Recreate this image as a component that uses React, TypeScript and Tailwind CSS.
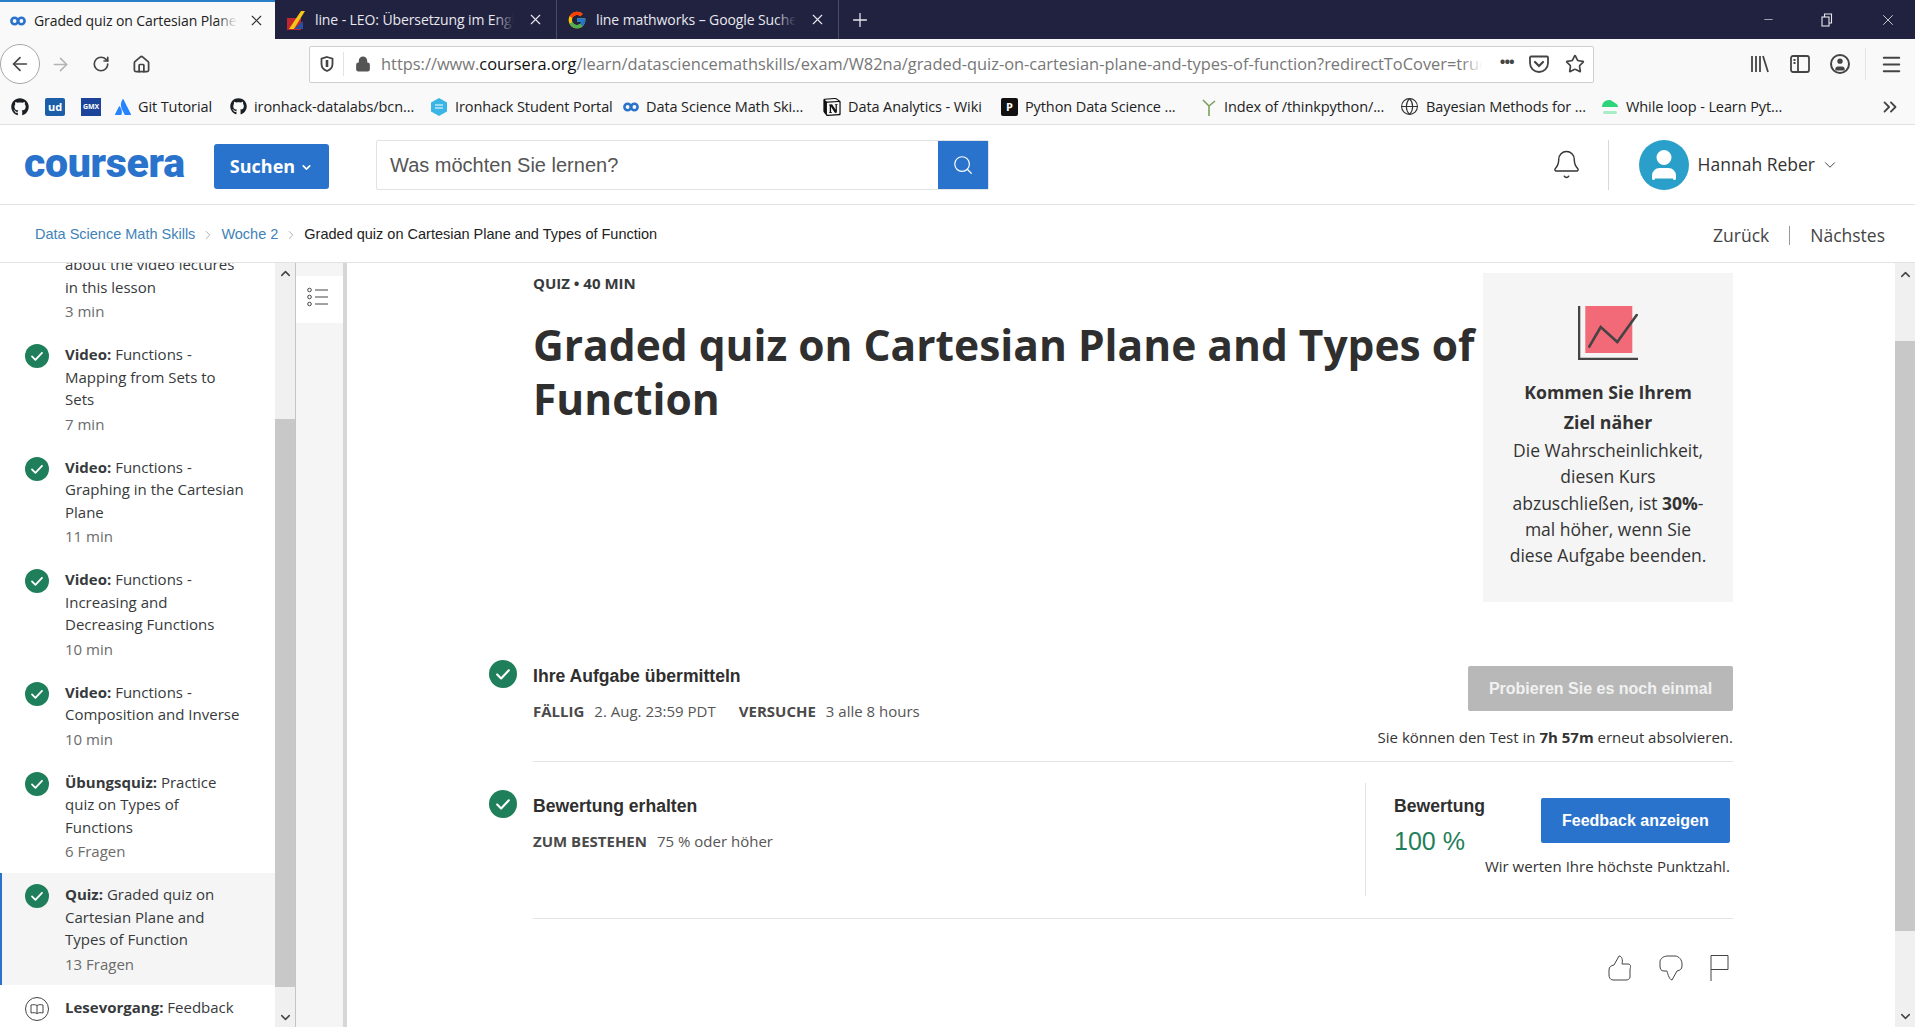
import React from 'react';
import { ArrowLeft, ArrowRight, RotateCw, Home, Lock, Star, Search, ChevronDown, ChevronUp, ChevronRight, ChevronsRight, Bell, Plus, X, Minus, Globe, User, Menu } from 'lucide-react';
import { FaGithub } from 'react-icons/fa';
import { FcGoogle } from 'react-icons/fc';
import { SiAtlassian, SiNotion } from 'react-icons/si';

const CourseraMark = () => (
  <svg width="16" height="10" viewBox="0 0 16 10" fill="none" stroke="#2a73cc" strokeWidth="2.6">
    <circle cx="4.6" cy="5" r="3.2" />
    <circle cx="11.4" cy="5" r="3.2" />
  </svg>
);

const Check = ({ size }: { size: number }) => (
  <svg width={size} height={size} viewBox="0 0 24 24" className="shrink-0">
    <circle cx="12" cy="12" r="12" fill="#1f7f5a" />
    <path d="M7 12.4l3.4 3.4L17 8.8" fill="none" stroke="#fff" strokeWidth="1.8" strokeLinecap="round" strokeLinejoin="round" />
  </svg>
);

const BookCircle = () => (
  <svg width="24" height="24" viewBox="0 0 24 24" fill="none" stroke="#444" strokeWidth="1" className="shrink-0">
    <circle cx="12" cy="12" r="11.5" />
    <path d="M12 8.5c-1.5-1-4-1-6-.5v8c2-.5 4.5-.5 6 .5 1.5-1 4-1 6-.5V8c-2-.5-4.5-.5-6 .5zM12 8.5v8" />
  </svg>
);

const TABS = [
  { title: 'Graded quiz on Cartesian Plane', width: 'w-[275px]', iconWidth: 'w-[34px]', closeWidth: 'w-[38px]', active: true },
  { title: 'line - LEO: Übersetzung im Engl', width: 'w-[282px]', iconWidth: 'w-[40px]', closeWidth: 'w-[42px]', active: false },
  { title: 'line mathworks – Google Suche', width: 'w-[282px]', iconWidth: 'w-[39px]', closeWidth: 'w-[42px]', active: false },
];

const BOOKMARKS: { label?: string; width: string; icon: React.ReactNode }[] = [
  { width: 'w-[34px]', icon: <FaGithub size={18} color="#1b1f23" /> },
  { width: 'w-[36px]', icon: <span className="w-[20px] h-[18px] bg-[#1c5fa8] text-white text-[11px] font-bold leading-[18px] text-center rounded-[2px]">ud</span> },
  { width: 'w-[34px]', icon: <span className="w-[20px] h-[18px] bg-[#1c449b] text-white text-[7px] font-bold leading-[18px] text-center">GMX</span> },
  { label: 'Git Tutorial', width: 'w-[115px]', icon: <SiAtlassian size={16} color="#2684ff" /> },
  { label: 'ironhack-datalabs/bcn...', width: 'w-[200px]', icon: <FaGithub size={17} color="#1b1f23" /> },
  { label: 'Ironhack Student Portal', width: 'w-[193px]', icon: <svg width="18" height="18" viewBox="0 0 18 18"><path d="M9 0l8 4.5v9L9 18l-8-4.5v-9z" fill="#39b6e6" /><path d="M5 7h8M5 10h8" stroke="#fff" strokeWidth="1" /></svg> },
  { label: 'Data Science Math Ski...', width: 'w-[200px]', icon: <CourseraMark /> },
  { label: 'Data Analytics - Wiki', width: 'w-[178px]', icon: <SiNotion size={18} color="#111" /> },
  { label: 'Python Data Science ...', width: 'w-[200px]', icon: <span className="w-[17px] h-[18px] bg-[#111] text-white text-[11px] font-bold leading-[18px] text-center rounded-[2px]">P</span> },
  { label: 'Index of /thinkpython/...', width: 'w-[199px]', icon: <svg width="16" height="18" viewBox="0 0 16 18" fill="none" stroke="#7ba05b" strokeWidth="1.6"><path d="M8 18V8M8 8L2 2M8 8l6-5" /></svg> },
  { label: 'Bayesian Methods for ...', width: 'w-[201px]', icon: <Globe size={19} color="#333" strokeWidth={1.4} /> },
  { label: 'While loop - Learn Pyt...', width: 'w-[190px]', icon: <svg width="18" height="16" viewBox="0 0 18 16"><path d="M1 8c0-4 3-7 7-7 3 0 4 2 6 3 2 1 3 2 3 4H1z" fill="#2ed47a" /><rect x="2" y="12" width="14" height="3" rx="1.5" fill="#a8ecc6" /></svg> },
];

const LESSONS: { kind: string; lines: string; meta: string; selected?: boolean }[] = [
  { kind: 'Video:', lines: 'Functions - Mapping from Sets to Sets', meta: '7 min' },
  { kind: 'Video:', lines: 'Functions - Graphing in the Cartesian Plane', meta: '11 min' },
  { kind: 'Video:', lines: 'Functions - Increasing and Decreasing Functions', meta: '10 min' },
  { kind: 'Video:', lines: 'Functions - Composition and Inverse', meta: '10 min' },
  { kind: 'Übungsquiz:', lines: 'Practice quiz on Types of Functions', meta: '6 Fragen' },
  { kind: 'Quiz:', lines: 'Graded quiz on Cartesian Plane and Types of Function', meta: '13 Fragen', selected: true },
];

const ScrollArrow = ({ up }: { up?: boolean }) =>
  up ? <ChevronUp size={15} strokeWidth={2.4} color="#444" /> : <ChevronDown size={15} strokeWidth={2.4} color="#444" />;

const BrowserChrome = () => (
  <>
    <div className="h-[39px] bg-[#20223f] flex shrink-0">
      {TABS.map((tab, i) => (
        <div key={tab.title} className={`${tab.width} h-full flex items-center relative ${tab.active ? 'bg-[#f9f9fa] border-t-2 border-[#2a7fc9] text-[#222]' : 'border-r border-[#4a4c66] text-[#e8e8ee]'}`}>
          <span className={`${tab.iconWidth} flex justify-center shrink-0 pl-[1px]`}>
            {i === 0 && <CourseraMark />}
            {i === 1 && <svg width="20" height="22" viewBox="0 0 20 22"><rect x="1" y="9" width="14" height="12" fill="#c1272d" /><path d="M3 20L15 2h4L8 20z" fill="#f5c518" /><path d="M8 20l9-8v8z" fill="#2a4f9e" /></svg>}
            {i === 2 && <FcGoogle size={20} />}
          </span>
          <span className="flex-1 text-[14px] whitespace-nowrap overflow-hidden relative tracking-[-0.1px]">
            {tab.title}
            <span className={`absolute right-0 top-0 bottom-0 w-[20px] bg-gradient-to-l ${tab.active ? 'from-[#f9f9fa]' : 'from-[#20223f]'} to-transparent`} />
          </span>
          <span className={`${tab.closeWidth} flex justify-center shrink-0`}>
            <X size={17} strokeWidth={1.6} color={tab.active ? '#333' : '#e8e8ee'} />
          </span>
        </div>
      ))}
      <div className="w-[42px] flex items-center justify-center">
        <Plus size={22} strokeWidth={1.4} color="#e8e8ee" />
      </div>
      <div className="flex-1" />
      <div className="flex items-center pr-[18px] gap-[46px] text-[#e8e8ee]">
        <Minus size={13} strokeWidth={1.2} />
        <svg width="12" height="14" viewBox="0 0 12 14" fill="none" stroke="#e8e8ee" strokeWidth="1.1"><rect x="1" y="4" width="7" height="9" /><path d="M3.5 4V1h7v9H8" /></svg>
        <X size={18} strokeWidth={1.1} />
      </div>
    </div>

    <div className="h-[50px] bg-[#f9f9fa] flex items-center shrink-0 text-[#444]">
      <div className="w-[40px] h-[40px] rounded-full border border-[#a8a8a8] bg-white flex items-center justify-center shrink-0">
        <ArrowLeft size={22} strokeWidth={1.8} />
      </div>
      <div className="w-[40px] flex justify-center"><ArrowRight size={21} strokeWidth={1.8} color="#b4b4b4" /></div>
      <div className="w-[41px] flex justify-center"><RotateCw size={18} strokeWidth={2.2} /></div>
      <div className="w-[40px] flex justify-center"><Home size={19} strokeWidth={2.2} /></div>
      <div className="w-[148px]" />
      <div className="w-[1285px] h-[37px] bg-white border border-[#cfcfcf] rounded-[2px] flex items-center shrink-0">
        <span className="w-[34px] flex justify-center border-r border-[#e3e3e3] h-[24px] items-center">
          <svg width="14" height="16" viewBox="0 0 14 16" fill="none" stroke="#444" strokeWidth="1.8"><path d="M7 1l5.5 1.6V8c0 3.5-2.5 5.8-5.5 7C4 13.8 1.500 11.500 1.500 8V2.600z" /><path d="M7 4v7" strokeWidth="2.6" /></svg>
        </span>
        <span className="w-[37px] flex justify-center"><Lock size={16} strokeWidth={2.6} fill="#555" color="#555" /></span>
        <span className="w-[1101px] text-[16.4px] text-[#777] whitespace-nowrap overflow-hidden relative">
          https://www.<span className="text-[#111]">coursera.org</span>/learn/datasciencemathskills/exam/W82na/graded-quiz-on-cartesian-plane-and-types-of-function?redirectToCover=true
          <span className="absolute right-0 top-0 bottom-0 w-[20px] bg-gradient-to-l from-white to-transparent" />
        </span>
        <span className="flex-1 flex items-center justify-around pl-[10px]">
          <span className="text-[15px] font-bold leading-none tracking-[-1px] pb-[6px]">•••</span>
          <svg width="20" height="19" viewBox="0 0 20 19" fill="none" stroke="#444" strokeWidth="1.8"><path d="M2 1.500h16a1 1 0 011 1V8c0 5-4 9-9 9s-9-4-9-9V2.500a1 1 0 011-1z" /><path d="M6 7l4 4 4-4" strokeLinecap="round" strokeWidth="2.200" /></svg>
          <Star size={20} strokeWidth={2} />
        </span>
      </div>
      <div className="w-[156px]" />
      <svg width="20" height="20" viewBox="0 0 20 20" fill="none" stroke="#444" strokeWidth="1.800" className="shrink-0"><path d="M2 2v16M6 2v16M10 2v16M13 2l5 16" /></svg>
      <div className="w-[20px]" />
      <svg width="20" height="20" viewBox="0 0 20 20" fill="none" stroke="#444" strokeWidth="1.800" className="shrink-0"><rect x="1" y="2" width="18" height="16" rx="2" /><path d="M8 2v16M3.500 6h2M3.500 9h2" /></svg>
      <div className="w-[20px]" />
      <div className="w-[20px] h-[20px] rounded-full border-2 border-[#444] flex items-center justify-center shrink-0 overflow-hidden"><User size={17} fill="#444" strokeWidth={0} /></div>
      <div className="w-[15px]" />
      <div className="w-px h-[32px] bg-[#e3e3e3]" />
      <div className="w-[14px]" />
      <Menu size={23} strokeWidth={2.2} className="shrink-0" />
    </div>

    <div className="h-[36px] bg-[#f9f9fa] border-b border-[#e0e0e0] flex items-center pl-[11px] shrink-0">
      {BOOKMARKS.map((b, i) => (
        <div key={i} className={`${b.width} flex items-center gap-[7px] shrink-0 text-[14.5px] text-[#222] whitespace-nowrap tracking-[-0.1px]`}>
          <span className="flex items-center justify-center">{b.icon}</span>
          {b.label && <span>{b.label}</span>}
        </div>
      ))}
      <div className="flex-1" />
      <ChevronsRight size={22} strokeWidth={2} color="#444" className="mr-[14px]" />
    </div>
  </>
);

const SiteHeader = () => (
  <>
    <div className="h-[80px] border-b border-[#e3e3e3] flex items-center shrink-0 pl-[24px]">
      <div className="w-[190px] font-['Roboto',sans-serif] font-black text-[41px] leading-none text-[#2a73cc] tracking-[-0.3px] pb-[2px]">coursera</div>
      <div className="w-[115px] h-[45px] mt-[3px] bg-[#2a73cc] rounded-[3px] flex items-center justify-center gap-[5px] text-white text-[18px] font-bold">
        Suchen <ChevronDown size={13} strokeWidth={3} className="mt-[3px]" />
      </div>
      <div className="ml-[47px] w-[613px] h-[50px] flex border border-[#e3e3e3] rounded-[2px] items-stretch">
        <div className="flex-1 flex items-center pl-[13px] font-['Liberation_Sans',sans-serif] text-[20px] text-[#555]">Was möchten Sie lernen?</div>
        <div className="w-[50px] bg-[#2a73cc] flex items-center justify-center"><Search size={22} strokeWidth={1.300} color="#fff" /></div>
      </div>
      <div className="flex-1" />
      <Bell size={31} strokeWidth={1.100} color="#333" />
      <div className="w-px h-[50px] bg-[#d8d8d8] ml-[26px] mr-[30px]" />
      <div className="w-[50px] h-[50px] rounded-full bg-[#2a9fc9] flex items-center justify-center overflow-hidden">
        <User size={36} fill="#fff" color="#fff" />
      </div>
      <div className="ml-[9px] text-[17.5px] text-[#333]">Hannah Reber</div>
      <ChevronDown size={18} strokeWidth={1.200} color="#333" className="ml-[6px] mr-[76px]" />
    </div>

    <div className="h-[58px] pt-[3px] border-b border-[#e3e3e3] flex items-center shrink-0 pl-[35px] font-['Liberation_Sans',sans-serif] text-[14.5px] bg-white">
      <span className="text-[#3f82b8]">Data Science Math Skills</span>
      <ChevronRight size={14} strokeWidth={1} color="#777" className="mx-[6px]" />
      <span className="text-[#3f82b8]">Woche 2</span>
      <ChevronRight size={14} strokeWidth={1} color="#777" className="mx-[6px]" />
      <span className="text-[#222]">Graded quiz on Cartesian Plane and Types of Function</span>
      <div className="flex-1" />
      <span className="font-['Open_Sans',sans-serif] text-[17.5px] text-[#444]">Zurück</span>
      <div className="w-px h-[19px] bg-[#999] mx-[20px]" />
      <span className="font-['Open_Sans',sans-serif] text-[17.5px] text-[#444] mr-[30px]">Nächstes</span>
    </div>
  </>
);

const Lesson = ({ kind, lines, meta, selected }: { kind: string; lines: string; meta: string; selected?: boolean }) => (
  <div className={`flex pr-[28px] pt-[11.25px] pb-[9.25px] ${selected ? 'bg-[#f5f5f5] border-l-2 border-[#2a73cc] pl-[23px]' : 'pl-[25px]'}`}>
    <div className="w-[40px] shrink-0"><Check size={24} /></div>
    <div className="text-[15px] leading-[22.5px] text-[#373a3c] -mt-[1px] mb-[1px]">
      <div><b className="font-bold">{kind}</b> {lines}</div>
      <div className="text-[#6b6b6b] mt-[2px]">{meta}</div>
    </div>
  </div>
);

const Sidebar = () => (
  <div className="flex shrink-0 h-full">
    <div className="w-[275px] h-full overflow-hidden">
      <div className="-mt-[10px] pl-[65px] pr-[28px] pb-[10.25px] text-[15px] leading-[22.5px] text-[#373a3c]">
        <div>about the video lectures in this lesson</div>
        <div className="text-[#6b6b6b] mt-[2px]">3 min</div>
      </div>
      {LESSONS.map(l => <Lesson key={l.lines} {...l} />)}
      <div className="flex pl-[25px] pr-[28px] py-[11.25px]">
        <div className="w-[40px] shrink-0"><BookCircle /></div>
        <div className="text-[15px] leading-[22.5px] text-[#373a3c] -mt-[1px]"><b className="font-bold">Lesevorgang:</b> Feedback</div>
      </div>
    </div>
    <div className="w-[21px] h-full bg-[#f0f0f0] border-r border-[#c4c4c4] flex flex-col items-center">
      <div className="h-[20px] flex items-center"><ScrollArrow up /></div>
      <div className="h-[136px]" />
      <div className="w-full flex-1 bg-[#c8c8c8]" />
      <div className="h-[40px] flex items-end pb-[2px]"><ScrollArrow /></div>
    </div>
    <div className="w-[47px] h-full bg-[#f5f5f5] border-r-[4px] border-[#d6d6d6] box-content">
      <div className="h-[47px] bg-white flex items-center justify-center mt-[13px] pb-[5px] pr-[3px]">
        <svg width="22" height="20" viewBox="0 0 22 20" fill="none" stroke="#444" strokeWidth="1">
          <circle cx="2.500" cy="3" r="1.800" /><circle cx="2.500" cy="10" r="1.800" /><circle cx="2.500" cy="17" r="1.800" />
          <path d="M8 3h13M8 10h13M8 17h13" />
        </svg>
      </div>
    </div>
  </div>
);

const Label = ({ children }: { children: React.ReactNode }) => <b className="font-bold text-[#4a4a4a]">{children}</b>;

const Content = () => (
  <div className="flex-1 h-full overflow-hidden pl-[142px]">
    <div className="w-[1244px]">
      <div className="pl-[44px] flex items-start">
        <div className="w-[950px]">
          <div className="text-[15px] font-bold leading-[20px] text-[#373a3c] mt-[10px]">QUIZ • 40 MIN</div>
          <h1 className="text-[42.5px] font-bold leading-[54px] text-[#2f2f2f] mt-[25px]">Graded quiz on Cartesian Plane and Types of Function</h1>
        </div>
        <div className="w-[250px] h-[329px] bg-[#f5f5f5] mt-[10px] flex flex-col items-center pt-[33px] px-[24px] text-center text-[#333]">
          <svg width="60" height="54" viewBox="0 0 60 54" className="shrink-0">
            <rect x="7.300" y="0" width="47" height="47" fill="#f26a78" />
            <path d="M1 0v53h59" fill="none" stroke="#444" strokeWidth="2.600" />
            <path d="M11.300 40.700L22.700 21l16.600 15L58.700 9" fill="none" stroke="#444" strokeWidth="2.600" strokeLinecap="round" />
          </svg>
          <div className="text-[17.7px] font-bold leading-[30px] mt-[17px]">Kommen Sie Ihrem Ziel näher</div>
          <div className="text-[17.5px] leading-[26.25px]">Die Wahrscheinlichkeit, diesen Kurs abzuschließen, ist <b className="font-bold">30%</b>-mal höher, wenn Sie diese Aufgabe beenden.</div>
        </div>
      </div>

      <div className="mt-[52px] ml-[44px] relative">
        <div className="h-[107px] border-b border-[#e3e3e3] flex justify-between box-content -mb-px">
          <div className="flex -ml-[44px]">
            <div className="w-[44px] pt-[6px]"><Check size={28} /></div>
            <div className="pt-[8px]">
              <div className="font-['Liberation_Sans',sans-serif] font-bold text-[17.6px] leading-[28px] text-[#2f2f2f]">Ihre Aufgabe übermitteln</div>
              <div className="mt-[10px] text-[15px] leading-[22px] text-[#555] flex gap-[10px]">
                <Label>FÄLLIG</Label><span>2. Aug. 23:59 PDT</span><span className="w-[3px]" /><Label>VERSUCHE</Label><span>3 alle 8 hours</span>
              </div>
            </div>
          </div>
          <div className="pt-[12px] flex flex-col items-end">
            <div className="w-[265px] h-[45px] bg-[#b8b8b8] rounded-[2px] flex items-center justify-center font-['Liberation_Sans',sans-serif] font-bold text-[16px] text-[#f1f1f1]">Probieren Sie es noch einmal</div>
            <div className="mt-[15px] text-[15px] leading-[22px] text-[#333]">Sie können den Test in <b className="font-bold">7h 57m</b> erneut absolvieren.</div>
          </div>
        </div>

        <div className="h-[156px] border-t border-b border-[#e3e3e3] flex justify-between box-content">
          <div className="flex -ml-[44px]">
            <div className="w-[44px] pt-[28px]"><Check size={28} /></div>
            <div className="pt-[30px]">
              <div className="font-['Liberation_Sans',sans-serif] font-bold text-[17.6px] leading-[28px] text-[#2f2f2f]">Bewertung erhalten</div>
              <div className="mt-[10px] text-[15px] leading-[22px] text-[#555] flex gap-[10px]">
                <Label>ZUM BESTEHEN</Label><span>75 % oder höher</span>
              </div>
            </div>
          </div>
          <div className="mt-[21px] h-[113px] w-[368px] border-l border-[#e3e3e3] pl-[28px] pr-[5px] pt-[11px] flex justify-between items-start">
            <div>
              <div className="font-['Liberation_Sans',sans-serif] font-bold text-[17.6px] leading-[24px] text-[#2f2f2f]">Bewertung</div>
              <div className="mt-[6px] font-['Liberation_Sans',sans-serif] text-[25px] leading-[34px] text-[#1f7f5a]">100 %</div>
            </div>
            <div className="flex flex-col items-end mt-[4px]">
              <div className="w-[189px] h-[45px] bg-[#2a73cc] rounded-[2px] flex items-center justify-center font-['Liberation_Sans',sans-serif] font-bold text-[16px] text-white">Feedback anzeigen</div>
              <div className="mt-[12px] text-[15px] leading-[22px] text-[#333] whitespace-nowrap">Wir werten Ihre höchste Punktzahl.</div>
            </div>
          </div>
        </div>

        <div className="mt-[36px] flex justify-end items-center gap-[27px] pr-[4px]">
          <svg width="24" height="26" viewBox="0 0 24 26" fill="none" stroke="#444" strokeWidth="1"><path d="M1 15c0-3 2-4.500 5-5L11 1c3 0 4 4 3 8h6c3 0 3 3 2 5v8c0 2-2 3-4 3H5c-3 0-4-3-4-5z" /></svg>
          <svg width="24" height="26" viewBox="0 0 24 26" fill="none" stroke="#444" strokeWidth="1"><path d="M23 11c0 3-2 4.500-5 5l-5 9c-3 0-5-9-5-9H5C2 16 1 14 1 11V7c0-3 3-6 8-6h7c4 0 7 4 7 8z" /></svg>
          <svg width="19" height="26" viewBox="0 0 19 26" fill="none" stroke="#444" strokeWidth="1"><path d="M1 26V.5h17v14H1" /></svg>
        </div>
      </div>
    </div>
  </div>
);

export default function App() {
  return (
    <div className="w-[1915px] h-[1027px] overflow-hidden bg-white flex flex-col font-['Open_Sans',sans-serif]">
      <BrowserChrome />
      <SiteHeader />
      <div className="flex-1 flex min-h-0">
        <Sidebar />
        <Content />
        <div className="w-[20px] h-full bg-[#f0f0f0] flex flex-col items-center shrink-0">
          <div className="h-[22px] flex items-center"><ScrollArrow up /></div>
          <div className="h-[56px]" />
          <div className="w-full h-[590px] bg-[#c8c8c8]" />
          <div className="flex-1" />
          <div className="h-[22px] flex items-center"><ScrollArrow /></div>
        </div>
      </div>
    </div>
  );
}
